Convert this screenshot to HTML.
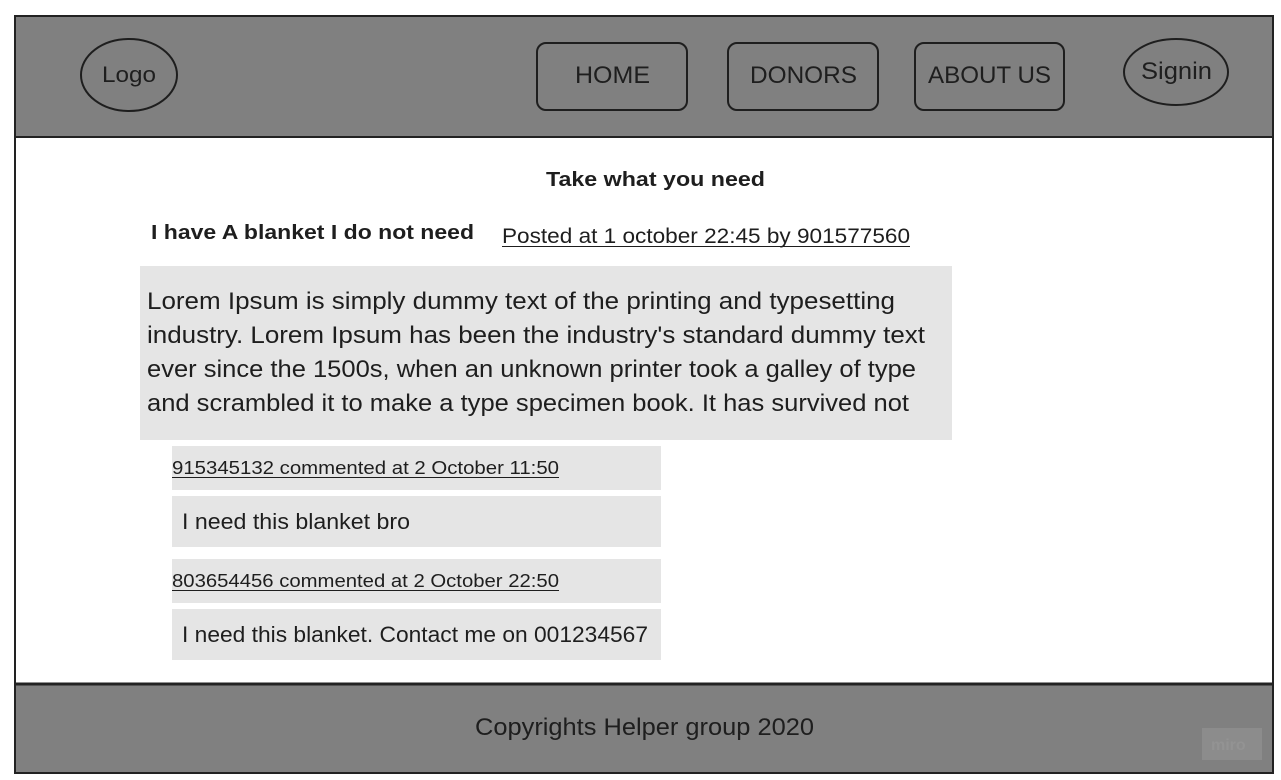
<!DOCTYPE html>
<html><head><meta charset="utf-8"><style>
html,body{margin:0;padding:0;background:#fff;width:1281px;height:780px;overflow:hidden}
svg{display:block}
text{font-family:"Liberation Sans",sans-serif;fill:#1e1e1e}
</style></head><body>
<svg width="1281" height="780" viewBox="0 0 1281 780" xmlns="http://www.w3.org/2000/svg">
<rect x="0" y="0" width="1281" height="780" fill="#fff"/>
<rect x="15" y="16" width="1258" height="757" fill="#fff" stroke="#222" stroke-width="2"/>
<rect x="15" y="16" width="1258" height="121" fill="#808080" stroke="#222" stroke-width="2"/>
<ellipse cx="129" cy="75" rx="48" ry="36" fill="none" stroke="#1e1e1e" stroke-width="2"/>
<text x="102" y="82" font-size="22" textLength="54" lengthAdjust="spacingAndGlyphs">Logo</text>
<rect x="537" y="43" width="150" height="67" rx="9" fill="none" stroke="#1e1e1e" stroke-width="2"/>
<text x="575" y="83" font-size="24" textLength="75" lengthAdjust="spacingAndGlyphs">HOME</text>
<rect x="728" y="43" width="150" height="67" rx="9" fill="none" stroke="#1e1e1e" stroke-width="2"/>
<text x="750" y="83" font-size="24" textLength="107" lengthAdjust="spacingAndGlyphs">DONORS</text>
<rect x="915" y="43" width="149" height="67" rx="9" fill="none" stroke="#1e1e1e" stroke-width="2"/>
<text x="928" y="83" font-size="24" textLength="123" lengthAdjust="spacingAndGlyphs">ABOUT US</text>
<ellipse cx="1176" cy="72" rx="52" ry="33" fill="none" stroke="#1e1e1e" stroke-width="2"/>
<text x="1141" y="79" font-size="24" textLength="71" lengthAdjust="spacingAndGlyphs">Signin</text>

<text x="546" y="186" font-size="20" font-weight="bold" textLength="219" lengthAdjust="spacingAndGlyphs">Take what you need</text>
<text x="151" y="239" font-size="20" font-weight="bold" textLength="323" lengthAdjust="spacingAndGlyphs">I have A blanket I do not need</text>
<text x="502" y="243" font-size="21" textLength="408" lengthAdjust="spacingAndGlyphs">Posted at 1 october 22:45 by 901577560</text>
<line x1="502" y1="246.5" x2="910" y2="246.5" stroke="#1e1e1e" stroke-width="1"/>

<rect x="140" y="266" width="812" height="174" fill="#e5e5e5"/>
<text x="147" y="309" font-size="24" textLength="748" lengthAdjust="spacingAndGlyphs">Lorem Ipsum is simply dummy text of the printing and typesetting</text>
<text x="147" y="343" font-size="24" textLength="778" lengthAdjust="spacingAndGlyphs">industry. Lorem Ipsum has been the industry's standard dummy text</text>
<text x="147" y="377" font-size="24" textLength="769" lengthAdjust="spacingAndGlyphs">ever since the 1500s, when an unknown printer took a galley of type</text>
<text x="147" y="411" font-size="24" textLength="762" lengthAdjust="spacingAndGlyphs">and scrambled it to make a type specimen book. It has survived not</text>

<rect x="172" y="446" width="489" height="44" fill="#e5e5e5"/>
<text x="172" y="474" font-size="18" textLength="387" lengthAdjust="spacingAndGlyphs">915345132 commented at 2 October 11:50</text>
<line x1="172" y1="477.5" x2="559" y2="477.5" stroke="#1e1e1e" stroke-width="1"/>
<rect x="172" y="496" width="489" height="51" fill="#e5e5e5"/>
<text x="182" y="529" font-size="22" textLength="228" lengthAdjust="spacingAndGlyphs">I need this blanket bro</text>

<rect x="172" y="559" width="489" height="44" fill="#e5e5e5"/>
<text x="172" y="587" font-size="18" textLength="387" lengthAdjust="spacingAndGlyphs">803654456 commented at 2 October 22:50</text>
<line x1="172" y1="590.5" x2="559" y2="590.5" stroke="#1e1e1e" stroke-width="1"/>
<rect x="172" y="609" width="489" height="51" fill="#e5e5e5"/>
<text x="182" y="642" font-size="22" textLength="466" lengthAdjust="spacingAndGlyphs">I need this blanket. Contact me on 001234567</text>

<rect x="15" y="684" width="1258" height="89" fill="#808080" stroke="#222" stroke-width="2"/>
<line x1="15" y1="684" x2="1273" y2="684" stroke="#222" stroke-width="3"/>
<text x="475" y="735" font-size="24" textLength="339" lengthAdjust="spacingAndGlyphs">Copyrights Helper group 2020</text>
<rect x="1202" y="728" width="60" height="32" fill="#8c8c8c"/>
<text x="1211" y="750" font-size="16" font-weight="bold" style="fill:#939393">miro</text>
</svg>
</body></html>
